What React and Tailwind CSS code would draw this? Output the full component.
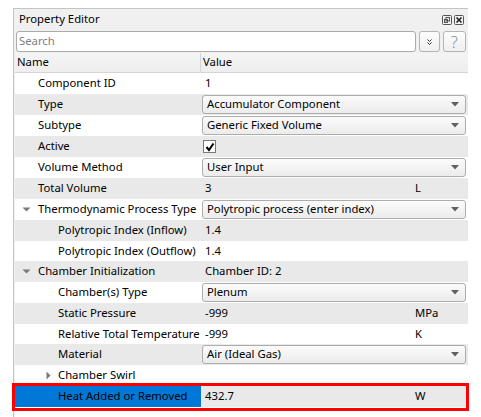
import React from "react";

const FONT = { fontFamily: '"Noto Sans", "Open Sans", sans-serif' };

function DownTri() {
  return (
    <svg width="9" height="5" viewBox="0 0 9 5">
      <path d="M0.5 0.5 L8.5 0.5 L4.5 4.5 Z" fill="#7a7a7a" />
    </svg>
  );
}

function RightTri() {
  return (
    <svg width="5" height="9" viewBox="0 0 5 9">
      <path d="M0.5 0.5 L4.5 4.5 L0.5 8.5 Z" fill="#7a7a7a" />
    </svg>
  );
}

function Combo({ text }) {
  return (
    <div className="flex-1 h-[19px] mr-[2px] flex items-center justify-between rounded-[3px] border border-[#adadad] bg-gradient-to-b from-[#fbfbfb] to-[#ececec] pl-[4px] pr-[6px]">
      <span>{text}</span>
      <svg width="8" height="5" viewBox="0 0 8 5">
        <path d="M0 0 L8 0 L4 4.5 Z" fill="#606060" />
      </svg>
    </div>
  );
}

const rows = [
  { name: "Component ID", level: 1, value: "1" },
  { name: "Type", level: 1, combo: "Accumulator Component" },
  { name: "Subtype", level: 1, combo: "Generic Fixed Volume" },
  { name: "Active", level: 1, check: true },
  { name: "Volume Method", level: 1, combo: "User Input" },
  { name: "Total Volume", level: 1, value: "3", unit: "L" },
  { name: "Thermodynamic Process Type", level: 1, arrow: "down", combo: "Polytropic process (enter index)" },
  { name: "Polytropic Index (Inflow)", level: 2, value: "1.4" },
  { name: "Polytropic Index (Outflow)", level: 2, value: "1.4", short: true },
  { name: "Chamber Initialization", level: 1, arrow: "down", value: "Chamber ID: 2" },
  { name: "Chamber(s) Type", level: 2, combo: "Plenum" },
  { name: "Static Pressure", level: 2, value: "-999", unit: "MPa" },
  { name: "Relative Total Temperature", level: 2, value: "-999", unit: "K", short: true },
  { name: "Material", level: 2, combo: "Air (Ideal Gas)" },
  { name: "Chamber Swirl", level: 2, arrow: "right" },
  { name: "Heat Added or Removed", level: 2, value: "432.7", unit: "W", selected: true },
];

function Row({ r, i }) {
  const gray = i % 2 === 1;
  const bg = gray ? "bg-[#e9e9e9]" : "bg-white";
  return (
    <div className={`flex ${r.short ? "h-[20px]" : "h-[21px]"} items-center ${r.selected ? "bg-[#e9e9e9]" : bg}`}>
      <div
        className={`w-[186px] h-full flex items-center shrink-0 ${r.selected ? "bg-[#0078d7]" : ""}`}
      >
        <div className={`${r.level === 1 ? "w-[23px]" : "w-[43px]"} flex justify-end pr-[7px] shrink-0`}>
          {r.arrow === "down" && <DownTri />}
          {r.arrow === "right" && <RightTri />}
        </div>
        <span className="whitespace-nowrap">{r.name}</span>
      </div>
      <div className="flex-1 h-full flex items-center pl-[1px]">
        {r.combo ? (
          <Combo text={r.combo} />
        ) : r.check ? (
          <div className="ml-[1px] w-[13px] h-[13px] border border-[#7a7a7a] bg-white flex items-center justify-center">
            <svg width="10" height="10" viewBox="0 0 10 10">
              <path d="M1.5 5 L4 8 L8.5 1.5" stroke="#000" strokeWidth="2" fill="none" />
            </svg>
          </div>
        ) : (
          <>
            <span className="w-[213px] pl-[3px] whitespace-nowrap">{r.value}</span>
            {r.unit && <span>{r.unit}</span>}
          </>
        )}
      </div>
    </div>
  );
}

export default function App() {
  return (
    <div className="w-[481px] h-[417px] bg-white relative text-[11.3px] text-black overflow-hidden" style={FONT}>
      <div className="absolute left-[13px] top-[8px] w-[455px] h-[409px] border-l border-t border-[#c4c4c4] bg-[#f0f0f0] flex flex-col">
        {/* Title */}
        <div className="h-[21px] flex items-center justify-between pl-[5px] pr-[4px]">
          <span>Property Editor</span>
          <div className="flex gap-[2px] items-center">
            <svg width="10" height="10" viewBox="0 0 10 10">
              <rect x="0.5" y="0.5" width="9" height="9" rx="1" fill="none" stroke="#555" />
              <rect x="4" y="2.5" width="3.5" height="3.5" fill="none" stroke="#555" />
              <rect x="2.5" y="4.5" width="3" height="3" fill="none" stroke="#555" />
            </svg>
            <svg width="10" height="10" viewBox="0 0 10 10">
              <rect x="0.5" y="0.5" width="9" height="9" rx="1" fill="none" stroke="#555" />
              <path d="M2.5 2.5 L7.5 7.5 M7.5 2.5 L2.5 7.5" stroke="#222" strokeWidth="1.6" />
            </svg>
          </div>
        </div>
        {/* Search */}
        <div className="h-[23px] flex items-center pl-[2px] pr-[2px] gap-[3px]">
          <div className="w-[400px] h-[21px] rounded-[3px] border border-[#ababab] bg-white flex items-center pl-[2px] text-[#808080]">
            Search
          </div>
          <div className="w-[21px] h-[21px] rounded-[3px] border border-[#b5b5b5] bg-gradient-to-b from-[#fdfdfd] to-[#efefef] flex items-center justify-center">
            <svg width="5" height="6" viewBox="0 0 5 6">
              <path d="M0.5 0.5 L2.5 2.5 L4.5 0.5 M0.5 3.5 L2.5 5.5 L4.5 3.5" stroke="#333" strokeWidth="1" fill="none" />
            </svg>
          </div>
          <div className="w-[23px] h-[21px] rounded-[3px] border border-[#b5b5b5] bg-gradient-to-b from-[#fdfdfd] to-[#efefef] flex items-center justify-center text-[#8a8a8a] text-[16px] font-light leading-none">
            ?
          </div>
        </div>
        {/* Header */}
        <div className="h-[20px] flex items-center border-b border-[#d5d5d5] bg-gradient-to-b from-[#f4f4f4] to-[#eeeeee] ml-[1px]">
          <div className="w-[186px] h-full flex items-center pl-[2px] border-r border-[#d5d5d5]">Name</div>
          <div className="pl-[2px]">Value</div>
        </div>
        {/* Rows */}
        <div className="flex flex-col bg-white ml-[1px] flex-1">
          {rows.map((r, i) => (
            <Row key={r.name} r={r} i={i} />
          ))}
        </div>
      </div>
      {/* annotation */}
      <div className="absolute left-[12px] top-[383px] w-[457px] h-[28px] border-[3px] border-[#ff0000]" />
    </div>
  );
}
